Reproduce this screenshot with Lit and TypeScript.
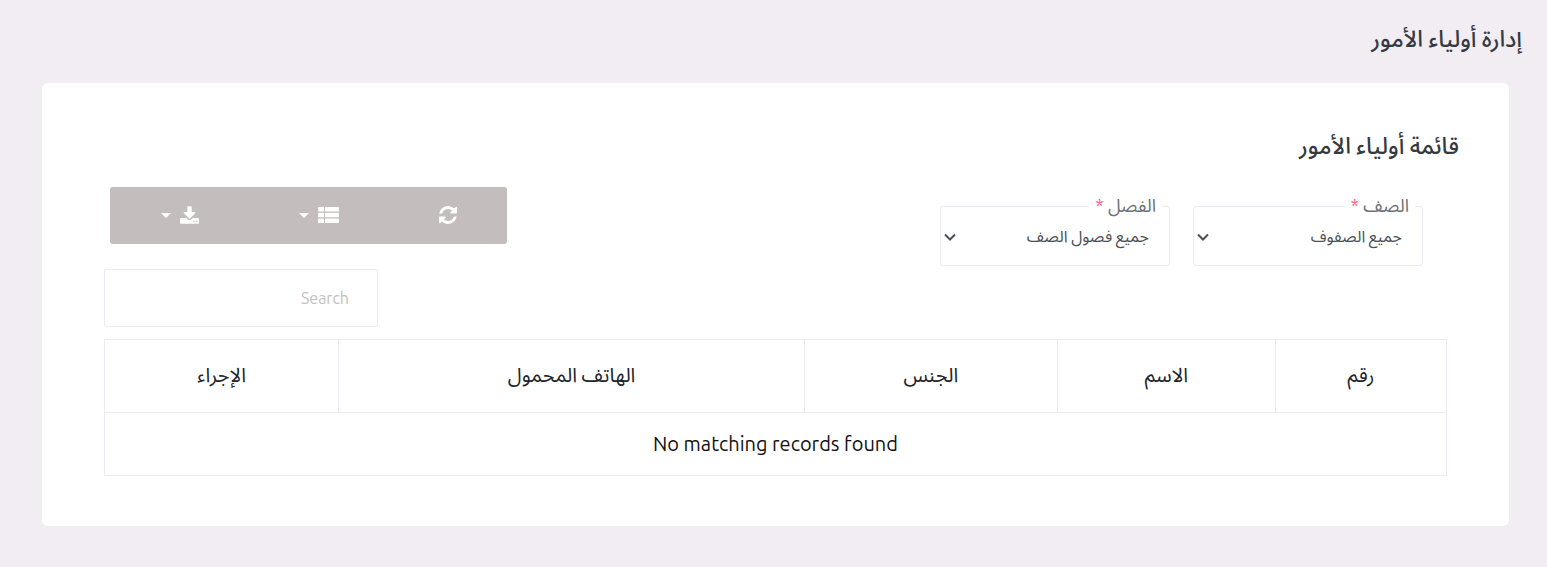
import { LitElement, html, css } from 'lit';
import { customElement, state } from 'lit/decorators.js';

interface Column {
  key: string;
  title: string;
}

const COLUMNS: Column[] = [
  { key: 'number', title: 'رقم' },
  { key: 'name', title: 'الاسم' },
  { key: 'gender', title: 'الجنس' },
  { key: 'mobile', title: 'الهاتف المحمول' },
  { key: 'operate', title: 'الإجراء' },
];

const refreshIcon = html`<svg class="icon refresh" viewBox="0 0 1536 1536" aria-hidden="true">
  <path d="M1511 928q0 5-1 7-64 268-268 434.500T764 1536q-146 0-282.500-55T238 1324l-129 129q-19 19-45 19t-45-19-19-45V960q0-26 19-45t45-19h448q26 0 45 19t19 45-19 45l-137 137q71 66 161 102t187 36q134 0 250-65t186-179q11-17 53-117 8-23 30-23h192q13 0 22.500 9.500t9.500 22.500zm25-800v448q0 26-19 45t-45 19h-448q-26 0-45-19t-19-45 19-45l138-138Q969 256 768 256q-134 0-250 65T332 500q-11 17-53 117-8 23-30 23H50q-13 0-22.500-9.500T18 608v-7q65-268 270-434.500T768 0q146 0 284 55.500T1297 212l130-129q19-19 45-19t45 19 19 45z"/>
</svg>`;

const listIcon = html`<svg class="icon list" viewBox="0 0 21 16" aria-hidden="true">
  <rect x="0" y="0" width="6" height="4.600" rx="0.600"/><rect x="7" y="0" width="14" height="4.600" rx="0.600"/>
  <rect x="0" y="5.700" width="6" height="4.600" rx="0.600"/><rect x="7" y="5.700" width="14" height="4.600" rx="0.600"/>
  <rect x="0" y="11.400" width="6" height="4.600" rx="0.600"/><rect x="7" y="11.400" width="14" height="4.600" rx="0.600"/>
</svg>`;

const downloadIcon = html`<svg class="icon download" viewBox="0 0 1664 1536" aria-hidden="true">
  <path d="M1280 1344q0-26-19-45t-45-19-45 19-19 45 19 45 45 19 45-19 19-45zm256 0q0-26-19-45t-45-19-45 19-19 45 19 45 45 19 45-19 19-45zm128-224v320q0 40-28 68t-68 28H96q-40 0-68-28t-28-68v-320q0-40 28-68t68-28h465l135 136q58 56 136 56t136-56l136-136h464q40 0 68 28t28 68zm-325-569q17 41-14 70l-448 448q-18 19-45 19t-45-19L339 621q-31-29-14-70 17-39 59-39h256V64q0-26 19-45t45-19h256q26 0 45 19t19 45v448h256q42 0 59 39z"/>
</svg>`;

@customElement('select-field')
export class SelectField extends LitElement {
  static properties = {
    label: { type: String },
    option: { type: String },
  };
  declare label: string;
  declare option: string;

  static styles = css`
    :host {
      display: block;
      position: relative;
      flex: 0 0 230px;
    }
    .label {
      position: absolute;
      top: -13px;
      inset-inline-start: 8px;
      padding: 0 6px;
      background: #fff;
      color: #6c7176;
      font-size: 18px;
      line-height: 24px;
      white-space: nowrap;
    }
    .required {
      color: #fe6383;
    }
    .select {
      appearance: none;
      display: block;
      box-sizing: border-box;
      width: 100%;
      height: 60px;
      margin: 0;
      padding: 0 20px;
      border: 1px solid #ebebf2;
      border-radius: 3px;
      background: transparent;
      color: #495057;
      font: inherit;
      font-size: 16px;
      line-height: 32px;
    }
    .chevron {
      position: absolute;
      inset-inline-end: 4px;
      top: 26px;
      width: 12px;
      height: 10px;
      fill: none;
      stroke: #495057;
      stroke-width: 2;
      pointer-events: none;
    }
  `;

  render() {
    return html`
      <label class="label" for="select">${this.label} <span class="required">*</span></label>
      <select class="select" id="select" required>
        <option>${this.option}</option>
      </select>
      <svg class="chevron" viewBox="0 0 12 10" aria-hidden="true"><path d="M1 2.500L6 7.500L11 2.500"/></svg>
    `;
  }
}

@customElement('app-root')
export class AppRoot extends LitElement {
  @state() private query = '';

  static styles = css`
    :host {
      display: block;
      box-sizing: border-box;
      min-height: 100vh;
      padding: 24px 25px 41px;
      background: #f2edf3;
      color: #343a40;
      font-family: Ubuntu, 'Noto Sans Arabic', 'Noto Sans', 'Open Sans', sans-serif;
    }
    .page-title,
    .card-title {
      margin: 0;
      font-size: 23px;
      line-height: 30px;
      font-weight: 500;
    }
    .card {
      margin: 29px 13px 0 17px;
      padding: 48px 50px 50px;
      border-radius: 6px;
      background: #fff;
    }
    .content {
      padding: 0 12px;
    }
    .tools {
      display: flex;
      justify-content: space-between;
      align-items: flex-start;
      padding-top: 26px;
    }
    .filters {
      display: flex;
      gap: 23px;
      padding: 19px 24px 0 0;
    }
    .actions {
      display: flex;
      margin-inline-end: 6px;
      padding-inline-end: 1px;
      border-radius: 3px;
      background: #c3bdbd;
      overflow: hidden;
    }
    .action {
      display: flex;
      align-items: center;
      gap: 9px;
      height: 57px;
      margin: 0;
      padding: 0 50px 1px;
      border: 0;
      background: none;
      color: #fff;
      cursor: pointer;
    }
    .icon {
      display: block;
      fill: currentColor;
    }
    .refresh {
      width: 18px;
      height: 18px;
    }
    .list {
      width: 21px;
      height: 16px;
    }
    .download {
      width: 19px;
      height: 18px;
    }
    .caret {
      border: 5px solid transparent;
      border-top-color: currentColor;
      border-bottom: 0;
    }
    .search {
      display: block;
      box-sizing: border-box;
      width: 274px;
      height: 58px;
      margin: 3px 0 12px;
      margin-inline-start: auto;
      padding: 0 28px;
      border: 1px solid #ebebf2;
      border-radius: 2px;
      color: #495057;
      font: inherit;
      font-size: 16px;
    }
    .search::placeholder {
      color: #c2c1c1;
      opacity: 1;
    }
    .table {
      width: 100%;
      table-layout: fixed;
      border-collapse: collapse;
      color: #212529;
      font-size: 20px;
      line-height: 28px;
      text-align: center;
    }
    .cell {
      box-sizing: border-box;
      padding: 21px 10px 23px;
      border: 1px solid #ebebf2;
      font-weight: 400;
    }
    .empty {
      padding: 17px 10px;
      color: #111;
    }
    .number {
      width: 12.75%;
    }
    .name {
      width: 16.25%;
    }
    .gender {
      width: 18.85%;
    }
    .mobile {
      width: 34.7%;
    }
  `;

  render() {
    return html`
      <main dir="rtl">
        <h1 class="page-title">إدارة أولياء الأمور</h1>
        <section class="card">
          <h2 class="card-title">قائمة أولياء الأمور</h2>
          <div class="content">
            <div class="tools">
              <div class="filters">
                <select-field label="الصف" option="جميع الصفوف"></select-field>
                <select-field label="الفصل" option="جميع فصول الصف"></select-field>
              </div>
              <div class="actions">
                <button class="action" type="button" aria-label="Refresh">${refreshIcon}</button>
                <button class="action" type="button" aria-label="Columns">${listIcon}<span class="caret"></span></button>
                <button class="action" type="button" aria-label="Export data">${downloadIcon}<span class="caret"></span></button>
              </div>
            </div>
            <input
              class="search"
              type="text"
              placeholder="Search"
              aria-label="Search"
              .value=${this.query}
              @input=${(e: Event) => (this.query = (e.target as HTMLInputElement).value)}
            />
            <table class="table">
              <thead>
                <tr>${COLUMNS.map((c) => html`<th class="cell ${c.key}" scope="col">${c.title}</th>`)}</tr>
              </thead>
              <tbody>
                <tr><td class="cell empty" colspan=${COLUMNS.length}>No matching records found</td></tr>
              </tbody>
            </table>
          </div>
        </section>
      </main>
    `;
  }
}
